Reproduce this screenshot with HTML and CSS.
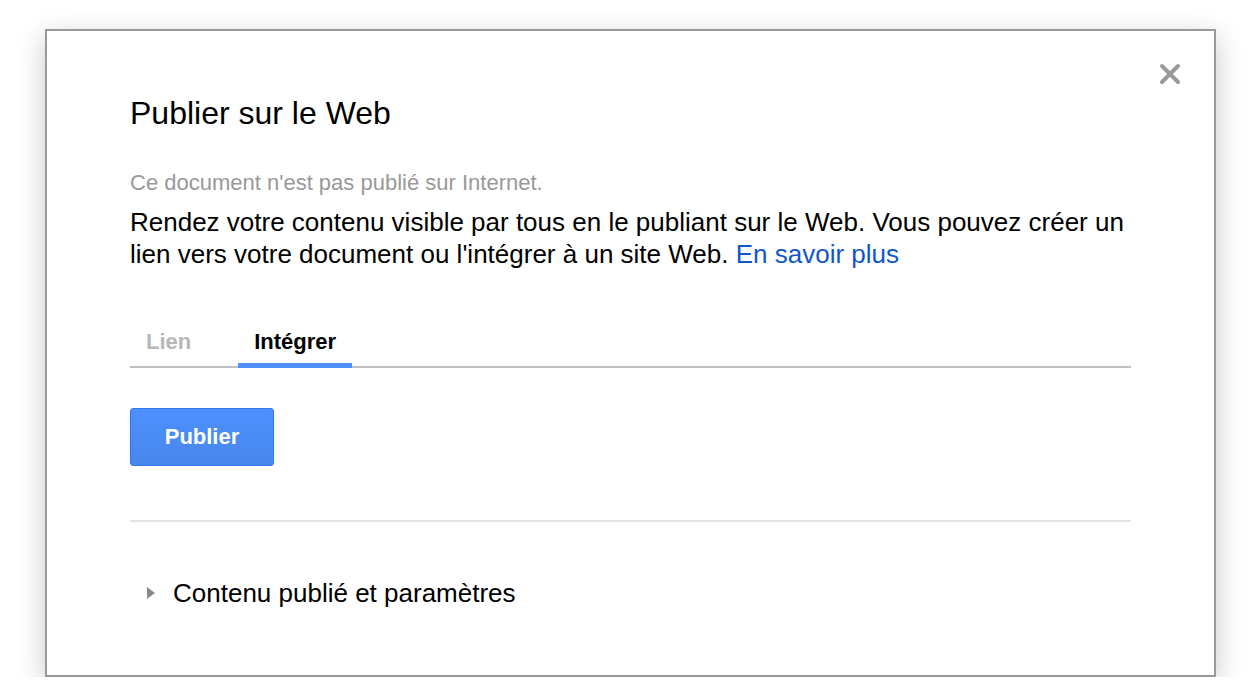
FILE: index.html
```html
<!DOCTYPE html>
<html lang="fr">
<head>
<meta charset="UTF-8" />
<meta name="viewport" content="width=device-width, initial-scale=1" />
<title>Publier sur le Web</title>
<link rel="stylesheet" href="styles.css">
</head>
<body>

<div class="dialog" role="dialog" aria-labelledby="dialog-title">
  <button type="button" class="close" title="Fermer">
    <svg width="22" height="22" viewBox="0 0 22 22" aria-hidden="true">
      <path d="M3 3 L19 19 M19 3 L3 19" stroke="#9a9a9a" stroke-width="4" stroke-linecap="round" />
    </svg>
  </button>

  <h1 id="dialog-title" class="title">Publier sur le Web</h1>

  <p class="status">Ce document n'est pas publié sur Internet.</p>
  <p class="intro">Rendez votre contenu visible par tous en le publiant sur le Web. Vous pouvez créer un lien vers votre document ou l'intégrer à un site Web. <a href="#">En savoir plus</a></p>

  <div class="tabs">
    <div class="tab">Lien</div>
    <div class="tab active">Intégrer</div>
  </div>

  <button type="button" class="publish">Publier</button>

  <div class="separator"></div>

  <div class="disclosure">
    <span class="arrow"></span>
    <span>Contenu publié et paramètres</span>
  </div>
</div>

</body>
</html>
```

FILE: styles.css
```css
body {
  margin: 0;
  background: #fff;
  font-family: "Liberation Sans", Arial, sans-serif;
  color: #000;
}
.dialog {
  position: relative;
  margin: 29px 0 0 45px;
  width: 1171px;
  box-sizing: border-box;
  background: #fff;
  border: 2px solid #999;
  box-shadow: 0 8px 26px rgba(0, 0, 0, 0.22);
  padding: 63px 83px 66px 83px;
}
.close {
  position: absolute;
  top: 32px;
  right: 33px;
  width: 22px;
  height: 22px;
  padding: 0;
  border: none;
  background: none;
  cursor: pointer;
  filter: blur(0.5px);
}
.close svg {
  display: block;
}
.title {
  margin: 0;
  font-size: 32px;
  line-height: 38px;
  font-weight: normal;
}
.status {
  margin: 38px 0 0 0;
  font-size: 22px;
  line-height: 26px;
  color: #999;
}
.intro {
  margin: 10px 0 0 0;
  font-size: 26px;
  line-height: 32px;
}
.intro a {
  color: #1155cc;
  text-decoration: none;
}
.tabs {
  display: flex;
  gap: 31px;
  margin-top: 59px;
  border-bottom: 2px solid #c0c0c0;
}
.tab {
  padding: 0 16px 8px 16px;
  font-size: 22px;
  line-height: 26px;
  font-weight: bold;
  color: #b8b8b8;
  border-bottom: 5px solid transparent;
  margin-bottom: -2px;
}
.tab.active {
  color: #000;
  border-bottom-color: #4d90fe;
}
.publish {
  display: block;
  margin-top: 40px;
  width: 144px;
  height: 58px;
  border: 1px solid #3079ed;
  border-radius: 3px;
  background: linear-gradient(#4d90fe, #4787ed);
  color: #fff;
  font-family: inherit;
  font-size: 22px;
  font-weight: bold;
  cursor: pointer;
}
.separator {
  margin-top: 54px;
  height: 2px;
  background: #e5e5e5;
}
.disclosure {
  display: flex;
  align-items: center;
  margin-top: 55px;
  font-size: 26px;
  line-height: 32px;
}
.arrow {
  width: 0;
  height: 0;
  margin: 0 18px 0 17px;
  border-top: 6px solid transparent;
  border-bottom: 6px solid transparent;
  border-left: 8px solid #8a8a8a;
}
```
